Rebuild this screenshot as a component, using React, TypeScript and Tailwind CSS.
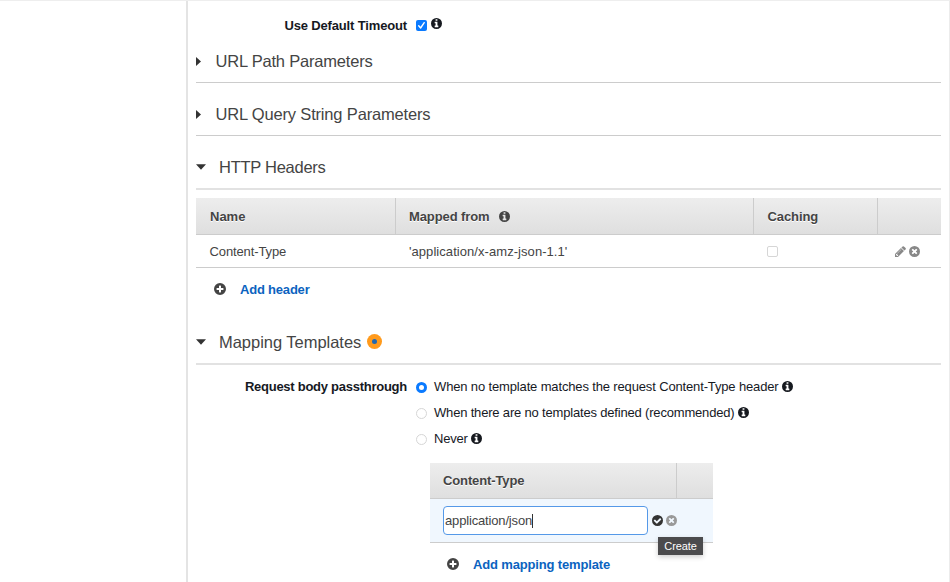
import React from "react";

const glyphs = {
  info: "M1152 1376v-160q0-14-9-23t-23-9h-96v-512q0-14-9-23t-23-9h-320q-14 0-23 9t-9 23v160q0 14 9 23t23 9h96v320h-96q-14 0-23 9t-9 23v160q0 14 9 23t23 9h448q14 0 23-9t9-23zM1024 480v-160q0-14-9-23t-23-9h-192q-14 0-23 9t-9 23v160q0 14 9 23t23 9h192q14 0 23-9t9-23z",
  plus: "M1344 960v-128q0-26-19-45t-45-19h-256v-256q0-26-19-45t-45-19h-128q-26 0-45 19t-19 45v256h-256q-26 0-45 19t-19 45v128q0 26 19 45t45 19h256v256q0 26 19 45t45 19h128q26 0 45-19t19-45v-256h256q26 0 45-19t19-45z",
  times: "M1277 1122q0-26-19-45l-181-181 181-181q19-19 19-45 0-27-19-46l-90-90q-19-19-46-19-26 0-45 19l-181 181-181-181q-19-19-45-19-27 0-46 19l-90 90q-19 19-19 46 0 26 19 45l181 181-181 181q-19 19-19 45 0 27 19 46l90 90q19 19 46 19 26 0 45-19l181-181 181 181q19 19 45 19 27 0 46-19l90-90q19-19 19-46z",
  check: "M1412 734q0-28-18-46l-91-90q-19-19-45-19t-45 19l-408 407-226-226q-19-19-45-19t-45 19l-91 90q-18 18-18 46 0 27 18 45l362 362q19 19 45 19 27 0 46-19l543-543q18-18 18-45z",
};

const disc = "M1664 896A768 768 0 1 1 128 896A768 768 0 1 1 1664 896Z";

function DiscIcon({ name, className }: { name: keyof typeof glyphs; className: string }) {
  return (
    <svg className={`shrink-0 ${className}`} viewBox="128 128 1536 1536" fill="currentColor" fillRule="evenodd">
      <path d={disc + glyphs[name]} />
    </svg>
  );
}

function Pencil({ className }: { className: string }) {
  return (
    <svg className={`shrink-0 ${className}`} viewBox="128 128 1536 1536" fill="currentColor">
      <path d="M491 1536l91-91-235-235-91 91v107h128v128h107zm523-928q0-22-22-22-10 0-17 7l-542 542q-7 7-7 17 0 22 22 22 10 0 17-7l542-542q7-7 7-17zm-54-192l416 416-832 832h-416v-416zm683 96q0 53-37 90l-166 166-416-416 166-165q36-38 90-38 53 0 91 38l235 234q37 39 37 91z" />
    </svg>
  );
}

function Caret({ open }: { open?: boolean }) {
  return open ? (
    <svg className="h-[6px] w-[10px]" viewBox="0 0 10 6">
      <path d="M0 0.3H10L5 5.7Z" fill="#333" />
    </svg>
  ) : (
    <svg className="mr-[5px] h-[9px] w-[5px]" viewBox="0 0 5 9">
      <path d="M0 0L5 4.5L0 9Z" fill="#333" />
    </svg>
  );
}

function Section({ title, open, className, tracking, children }: { title: string; open?: boolean; className: string; tracking: string; children?: React.ReactNode }) {
  return (
    <div className={`flex items-center ${className}`}>
      <Caret open={open} />
      <h2 className={`text-[16.5px] leading-5 text-[#444] ${tracking} ${open ? "ml-[13px]" : "ml-[9.5px]"}`}>{title}</h2>
      {children}
    </div>
  );
}

function Info({ className = "" }: { className?: string }) {
  return <DiscIcon name="info" className={`size-[11px] ${className}`} />;
}

function Radio({ checked }: { checked?: boolean }) {
  return checked ? (
    <span className="size-[11px] shrink-0 rounded-full border-[3.5px] border-[#0a7aff] bg-white" />
  ) : (
    <span className="size-[11px] shrink-0 rounded-full border border-[#d6d6d6] bg-white" />
  );
}

function Option({ text, checked, tracking }: { text: string; checked?: boolean; tracking: string }) {
  return (
    <div className="flex h-[26px] items-center">
      <Radio checked={checked} />
      <span className={`ml-[7px] ${tracking}`}>{text}</span>
      <Info className="mb-[1px] ml-[3.5px]" />
    </div>
  );
}

const head = "flex bg-linear-to-b from-[#ededed] to-[#dfdfdf] font-bold text-[#444] [text-shadow:0_1px_0_#fff]";

export default function App() {
  return (
    <div className="flex h-[582px] w-[950px] overflow-hidden border-t border-[#eee] bg-white font-['Liberation_Sans',Arial,sans-serif] text-[13px] leading-4 text-[#16191f]">
      <aside className="w-[186px] shrink-0" />
      <main className="flex grow flex-col border-r border-l-2 border-r-[#ececec] border-l-[#e4e4e4] pr-2 pl-2">
        <div className="flex h-[48px] shrink-0 items-center">
          <span className="w-[211px] pt-[1px] text-right font-bold tracking-[-0.15px]">Use Default Timeout</span>
          <span className="ml-[9px] flex size-[11px] items-center justify-center rounded-[2px] bg-[#0a7aff]">
            <svg className="size-[9px]" viewBox="0 0 9 9" fill="none" stroke="#fff" strokeWidth="1.4" strokeLinecap="round" strokeLinejoin="round">
              <path d="M1.7 4.8L3.6 7L7.2 1.7" />
            </svg>
          </span>
          <Info className="mb-[3px] ml-[4px]" />
        </div>
        <Section title="URL Path Parameters" tracking="tracking-[-0.2px]" className="h-[34px] shrink-0 border-b border-[#ccc] pb-[9px]" />
        <Section title="URL Query String Parameters" tracking="tracking-[-0.17px]" className="h-[53px] shrink-0 border-b border-[#ccc] pt-[10px]" />
        <Section title="HTTP Headers" tracking="tracking-[-0.27px]" open className="h-[54px] shrink-0 border-b-2 border-[#e2e2e2] pt-[10px]" />

        <div className={`mt-[8px] h-[37px] shrink-0 border-b border-[#ccc] ${head}`}>
          <div className="flex w-[199px] items-center pt-[2px] pl-[14px]">Name</div>
          <div className="flex w-[358px] items-center border-l border-[#ccc] pt-[2px] pl-[13px]">
            <span className="tracking-[-0.1px]">Mapped from</span>
            <Info className="mb-[1px] ml-[9px]" />
          </div>
          <div className="flex w-[124px] items-center border-l border-[#ccc] pt-[2px] pl-[13.5px] tracking-[-0.1px]">Caching</div>
          <div className="grow border-l border-[#ccc]" />
        </div>
        <div className="flex h-[33px] shrink-0 items-center border-b border-[#ccc] text-[#444]">
          <span className="w-[199px] pt-[1px] pl-[13.5px] tracking-[-0.12px]">Content-Type</span>
          <span className="w-[358px] pt-[1px] pl-[14px] tracking-[0.06px]">'application/x-amz-json-1.1'</span>
          <span className="w-[124px] pl-[14px]">
            <span className="mt-[1px] block size-[11px] rounded-[2px] border border-[#d6d6d6]" />
          </span>
          <Pencil className="ml-[18px] size-[11px] text-[#888]" />
          <DiscIcon name="times" className="ml-[3px] size-[11px] text-[#888]" />
        </div>
        <div className="flex h-[43px] shrink-0 items-center pl-[18px]">
          <DiscIcon name="plus" className="mb-[1px] size-[12px] text-[#444]" />
          <span className="ml-[14px] font-bold tracking-[-0.2px] text-[#0b63c0]">Add header</span>
        </div>

        <Section title="Mapping Templates" tracking="tracking-[-0.03px]" open className="h-[54px] shrink-0 border-b-2 border-[#e2e2e2] pt-[9px]">
          <span className="ml-[5.5px] flex size-[15px] items-center justify-center rounded-full bg-[#ff9a1c]">
            <span className="size-[5px] rounded-full bg-[#2168b0]" />
          </span>
        </Section>

        <div className="flex shrink-0 pt-[9px]">
          <span className="mt-[5px] w-[211px] text-right font-bold tracking-[-0.26px]">Request body passthrough</span>
          <div className="ml-[9px]">
            <Option checked tracking="tracking-[-0.145px]" text="When no template matches the request Content-Type header" />
            <Option tracking="tracking-[-0.18px]" text="When there are no templates defined (recommended)" />
            <Option tracking="tracking-[-0.2px]" text="Never" />
          </div>
        </div>

        <div className="mt-[11px] ml-[234px] w-[283px] shrink-0">
          <div className={`h-[36px] border-b border-[#ccc] ${head}`}>
            <div className="flex w-[246px] items-center pt-[1px] pl-[13px] tracking-[-0.12px]">Content-Type</div>
            <div className="grow border-l border-[#ccc]" />
          </div>
          <div className="relative flex h-[44px] items-center border-b border-[#ccc] bg-[#f0f7fe] pl-[13px] text-[#444]">
            <div className="flex h-[29px] w-[205px] items-center rounded-[4px] border border-[#5599e8] bg-white pl-[1px] tracking-[-0.16px]">
              application/json
              <span className="h-[14px] w-px bg-[#333]" />
            </div>
            <DiscIcon name="check" className="ml-[4px] size-[11px] text-[#333]" />
            <DiscIcon name="times" className="ml-[3px] size-[11px] text-[#999]" />
            <div className="absolute top-[38px] left-[228px] flex h-[18px] w-[45px] items-center justify-center bg-[#4b4b4d] text-[11px] tracking-[-0.1px] text-white shadow-[0_2px_5px_rgba(0,0,0,0.2)]">
              Create
            </div>
          </div>
          <div className="flex h-[43px] items-center pl-[17px]">
            <DiscIcon name="plus" className="mb-[1px] size-[12px] text-[#444]" />
            <span className="ml-[14px] font-bold tracking-[-0.15px] text-[#0b63c0]">Add mapping template</span>
          </div>
        </div>
      </main>
    </div>
  );
}
